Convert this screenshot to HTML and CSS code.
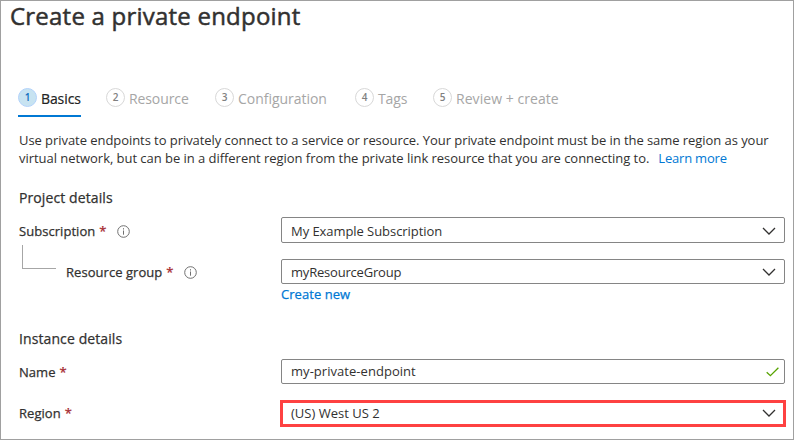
FILE: index.html
```html
<!DOCTYPE html>
<html lang="en">
<head>
<meta charset="utf-8">
<title>Create a private endpoint</title>
<link rel="stylesheet" href="styles.css">
</head>
<body>
<main class="page">
  <h1 class="title">Create a private endpoint</h1>
  <nav class="tabs">
    <a class="tab active"><span class="num">1</span><span>Basics</span></a>
    <a class="tab"><span class="num">2</span><span>Resource</span></a>
    <a class="tab"><span class="num">3</span><span class="t-config">Configuration</span></a>
    <a class="tab"><span class="num">4</span><span>Tags</span></a>
    <a class="tab"><span class="num">5</span><span class="t-review">Review + create</span></a>
  </nav>
  <p class="intro">Use private endpoints to privately connect to a service or resource. Your private endpoint must be in the same region as your<br><span class="second">virtual network, but can be in a different region from the private link resource that you are connecting to.</span><a class="learn">Learn more</a></p>

  <h2 class="section project">Project details</h2>
  <div class="row subscription">
    <div class="label"><span>Subscription</span><span class="req">*</span>
      <svg class="info" viewBox="0 0 13 13"><circle cx="6.5" cy="6.5" r="5.8"/><path d="M6.5 5.5v4.2M6.5 3.2v1.3"/></svg></div>
    <div class="field"><span class="v-sub">My Example Subscription</span><svg class="chevron" viewBox="0 0 14 9"><path d="M1 1l6 6 6-6"/></svg></div>
  </div>
  <div class="row group">
    <div class="label"><i class="branch"></i><span>Resource group</span><span class="req">*</span>
      <svg class="info" viewBox="0 0 13 13"><circle cx="6.5" cy="6.5" r="5.8"/><path d="M6.5 5.5v4.2M6.5 3.2v1.3"/></svg></div>
    <div class="field"><span class="v-group">myResourceGroup</span><svg class="chevron" viewBox="0 0 14 9"><path d="M1 1l6 6 6-6"/></svg></div>
  </div>
  <div class="create"><a>Create new</a></div>

  <h2 class="section instance">Instance details</h2>
  <div class="row name">
    <div class="label"><span>Name</span><span class="req">*</span></div>
    <div class="field"><span class="v-name">my-private-endpoint</span><svg class="check" viewBox="0 0 13 10"><path d="M.7 5.2l3.7 3.5L12.4.8"/></svg></div>
  </div>
  <div class="row region">
    <div class="label"><span>Region</span><span class="req">*</span></div>
    <div class="field marked"><span>(US) West US 2</span><svg class="chevron" viewBox="0 0 14 9"><path d="M1 1l6 6 6-6"/></svg></div>
  </div>
</main>
</body>
</html>
```
FILE: styles.css
```css
* { box-sizing: border-box; }
body {
  margin: 0;
  background: #fff;
  color: #323130;
  font: 13px/18px "Open Sans", "Noto Sans", sans-serif;
}
.page {
  width: 794px;
  height: 440px;
  border: 1px solid #a0a0a0;
  overflow: hidden;
  white-space: nowrap;
}
.title {
  margin: 0 0 0 9px;
  height: 86px;
  font-size: 24px;
  line-height: 29px;
  font-weight: 400;
  letter-spacing: .22px;
  -webkit-text-stroke: .5px;
}
.tabs {
  display: grid;
  grid-template-columns: 88px 109px 140px 78px auto;
  height: 30px;
  margin-left: 17px;
}
.tab {
  display: flex;
  gap: 4px;
  height: 30px;
  padding-top: 1px;
  color: #a6a6a6;
  font-size: 14px;
  line-height: 22px;
  letter-spacing: -.1px;
}
.active {
  width: 63px;
  color: #222;
  border-bottom: 2px solid #0078d4;
  -webkit-text-stroke: .2px;
}
.t-config { letter-spacing: -.03px; }
.t-review { letter-spacing: .05px; }
.num {
  flex: none;
  width: 19px;
  height: 19px;
  border: 1px solid #d8d8d8;
  border-radius: 50%;
  color: #808080;
  font-size: 10px;
  font-weight: 600;
  line-height: 17px;
  text-align: center;
  letter-spacing: 0;
  -webkit-text-stroke: 0;
}
.active .num { background: #c7e3f1; border-color: #b3d3fb; color: #106ebe; }
.intro { margin: 14px 0 0 18px; height: 55px; letter-spacing: -.058px; }
.second { letter-spacing: -.04px; }
.learn { margin-left: 9px; color: #0078d4; letter-spacing: -.2px; }
.section {
  margin: 0 0 0 18px;
  font-size: 14px;
  line-height: 24px;
  font-weight: 400;
  letter-spacing: .1px;
  -webkit-text-stroke: .25px;
}
.project { height: 31px; }
.row { display: flex; height: 26px; margin-left: 18px; }
.label { display: flex; width: 262px; align-items: center; letter-spacing: .05px; -webkit-text-stroke: .25px; }
.req { margin-left: 4px; color: #a4262c; }
.info { width: 13px; height: 13px; margin-left: 10px; fill: none; stroke: #707070; }
.field {
  display: flex;
  width: 504px;
  align-items: center;
  justify-content: space-between;
  padding: 0 8px 0 9px;
  border: 1px solid #858585;
  border-radius: 2px;
}
.subscription .label, .subscription .field { padding-top: 2px; }
.v-sub { letter-spacing: -.06px; }
.v-group { letter-spacing: -.2px; }
.chevron { width: 14px; height: 9px; fill: none; stroke: #323130; stroke-width: 1.3; }
.check { width: 13px; height: 10px; margin-right: -3px; fill: none; stroke: #57a300; stroke-width: 1.3; }
.group { margin-top: 16px; height: 25px; }
.group .chevron { margin-top: 2px; }
.group .info { margin-top: 1px; }
.branch {
  width: 34px;
  height: 24px;
  margin: -30px 10px 0 3px;
  border: solid #a6a6a6;
  border-width: 0 0 1px 1px;
}
.create {
  margin-left: 280px;
  height: 43px;
  line-height: 20px;
  color: #0078d4;
  letter-spacing: .05px;
  -webkit-text-stroke: .25px;
}
.instance { height: 32px; }
.name { height: 25px; }
.v-name { margin-top: -2px; letter-spacing: .04px; }
.region { margin-top: 16px; height: 27px; }
.region .label { padding-bottom: 2px; }
.marked {
  width: 506px;
  margin-left: -1px;
  padding: 0 7px 1px 8px;
  border: 3px solid #fe4141;
  border-radius: 0;
}
```
